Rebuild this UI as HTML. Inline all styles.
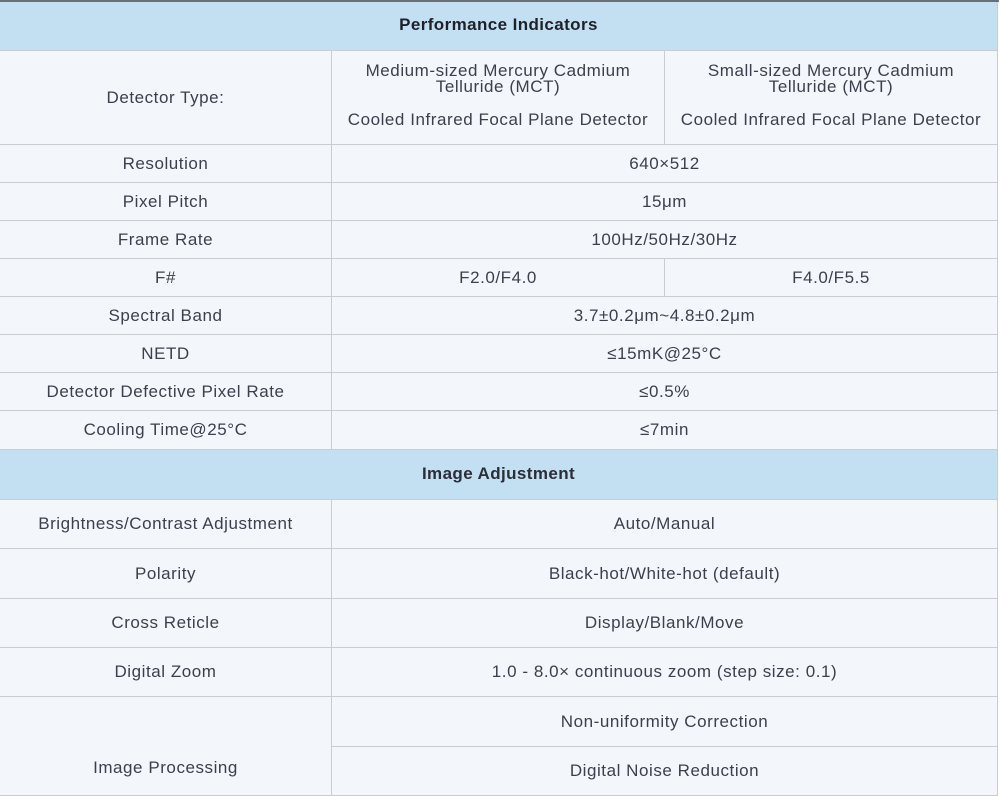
<!DOCTYPE html>
<html><head><meta charset="utf-8"><style>
*{margin:0;padding:0;box-sizing:border-box}
body{width:999px;height:796px;background:#fff;font-family:"Liberation Sans",sans-serif;font-size:17px;letter-spacing:0.55px;color:#3b404c;position:relative;overflow:hidden}
.c{position:absolute;display:flex;align-items:center;justify-content:center;text-align:center;background:#f3f7fb;border-bottom:1px solid #c9ccd0;border-right:1px solid #c9ccd0}
.h{background:#c3e0f3;font-weight:bold;color:#2a2e38;letter-spacing:0.4px}
</style></head><body>
<div style="position:absolute;left:0;top:0;width:999px;height:2px;background:#6b7076"></div>
<div class="c h" style="left:0;top:2px;width:998px;height:49px;color:#1e2128;padding-bottom:3px">Performance Indicators</div>
<div class="c" style="left:0;top:51px;width:332px;height:94px">Detector Type:</div>
<div class="c" style="left:332px;top:51px;width:333px;height:94px;display:block">
<div style="position:absolute;left:0;right:0;top:12px;line-height:16px">Medium-sized Mercury Cadmium<br>Telluride (MCT)</div>
<div style="position:absolute;left:0;right:0;top:60px;line-height:18px">Cooled Infrared Focal Plane Detector</div></div>
<div class="c" style="left:665px;top:51px;width:333px;height:94px;display:block">
<div style="position:absolute;left:0;right:0;top:12px;line-height:16px">Small-sized Mercury Cadmium<br>Telluride (MCT)</div>
<div style="position:absolute;left:0;right:0;top:60px;line-height:18px">Cooled Infrared Focal Plane Detector</div></div>

<div class="c" style="left:0;top:145px;width:332px;height:38px">Resolution</div>
<div class="c" style="left:332px;top:145px;width:666px;height:38px">640×512</div>
<div class="c" style="left:0;top:183px;width:332px;height:38px">Pixel Pitch</div>
<div class="c" style="left:332px;top:183px;width:666px;height:38px">15μm</div>
<div class="c" style="left:0;top:221px;width:332px;height:38px">Frame Rate</div>
<div class="c" style="left:332px;top:221px;width:666px;height:38px">100Hz/50Hz/30Hz</div>
<div class="c" style="left:0;top:259px;width:332px;height:38px">F#</div>
<div class="c" style="left:332px;top:259px;width:333px;height:38px">F2.0/F4.0</div>
<div class="c" style="left:665px;top:259px;width:333px;height:38px">F4.0/F5.5</div>
<div class="c" style="left:0;top:297px;width:332px;height:38px">Spectral Band</div>
<div class="c" style="left:332px;top:297px;width:666px;height:38px">3.7±0.2μm~4.8±0.2μm</div>
<div class="c" style="left:0;top:335px;width:332px;height:38px">NETD</div>
<div class="c" style="left:332px;top:335px;width:666px;height:38px">≤15mK@25°C</div>
<div class="c" style="left:0;top:373px;width:332px;height:38px">Detector Defective Pixel Rate</div>
<div class="c" style="left:332px;top:373px;width:666px;height:38px">≤0.5%</div>
<div class="c" style="left:0;top:411px;width:332px;height:39px">Cooling Time@25°C</div>
<div class="c" style="left:332px;top:411px;width:666px;height:39px">≤7min</div>

<div class="c h" style="left:0;top:450px;width:998px;height:50px;padding-bottom:2px">Image Adjustment</div>
<div class="c" style="left:0;top:500px;width:332px;height:49px">Brightness/Contrast Adjustment</div>
<div class="c" style="left:332px;top:500px;width:666px;height:49px">Auto/Manual</div>
<div class="c" style="left:0;top:549px;width:332px;height:50px">Polarity</div>
<div class="c" style="left:332px;top:549px;width:666px;height:50px">Black-hot/White-hot (default)</div>
<div class="c" style="left:0;top:599px;width:332px;height:49px">Cross Reticle</div>
<div class="c" style="left:332px;top:599px;width:666px;height:49px">Display/Blank/Move</div>
<div class="c" style="left:0;top:648px;width:332px;height:49px">Digital Zoom</div>
<div class="c" style="left:332px;top:648px;width:666px;height:49px">1.0 - 8.0× continuous zoom (step size: 0.1)</div>
<div class="c" style="left:0;top:697px;width:332px;height:99px;align-items:flex-end;padding-bottom:17px">Image Processing</div>
<div class="c" style="left:332px;top:697px;width:666px;height:50px">Non-uniformity Correction</div>
<div class="c" style="left:332px;top:747px;width:666px;height:49px">Digital Noise Reduction</div>
</body></html>
